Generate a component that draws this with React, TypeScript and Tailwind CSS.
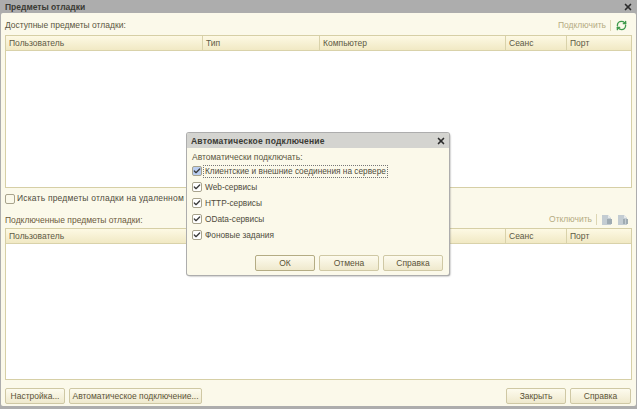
import React from 'react';
import { Check, RefreshCw, X } from 'lucide-react';

const font = { fontFamily: '"Liberation Sans", Arial, sans-serif' };

const columns = [
    { label: 'Пользователь', width: 'w-[197px]' },
    { label: 'Тип', width: 'w-[117px]' },
    { label: 'Компьютер', width: 'w-[186px]' },
    { label: 'Сеанс', width: 'w-[61px]' },
    { label: 'Порт', width: 'flex-1' },
];

function DebugTable({ height }: { height: string }) {
    return (
        <div className={`${height} mx-[4px] flex flex-col border border-[#d6cfa6] bg-white`}>
            <div className="flex h-[15px] shrink-0 border-b border-[#d9d2aa] bg-gradient-to-b from-[#fdf9e4] to-[#f1e9c4]">
                {columns.map((col) => (
                    <div
                        key={col.label}
                        className={`${col.width} border-r border-[#d9d2aa] pl-[3px] text-[8.5px] leading-[14px] text-[#5d5a45] last:border-r-0`}
                    >
                        {col.label}
                    </div>
                ))}
            </div>
        </div>
    );
}

function Button({ label, width, primary }: { label: string; width: string; primary?: boolean }) {
    return (
        <button
            className={`${width} h-[16px] whitespace-nowrap rounded-[2px] border ${primary ? 'border-[#b4ac84]' : 'border-[#cfc8a4]'} bg-gradient-to-b from-[#fdfbee] to-[#efe9cd] px-0 text-center text-[8.5px] leading-[14px] text-[#5b5337]`}
        >
            {label}
        </button>
    );
}

function CheckRow({ label, focused }: { label: string; focused?: boolean }) {
    return (
        <div className="flex h-[16px] items-center">
            <span
                className={`flex h-[10px] w-[10px] items-center justify-center rounded-[2px] border border-[#a8a38c] ${focused ? 'bg-[#b9cdf0]' : 'bg-white'}`}
            >
                <Check size={8} strokeWidth={4} className="text-[#3c3c3c]" />
            </span>
            <span
                className={`ml-[1px] pl-[1px] pr-[1px] text-[8.3px] leading-[11px] text-[#4f4c3c] ${focused ? 'border border-dotted border-[#777]' : 'border border-transparent'}`}
            >
                {label}
            </span>
        </div>
    );
}

export default function App() {
    return (
        <div className="relative h-[409px] w-[637px] overflow-hidden bg-[#adadad]" style={font}>
            {/* Title bar */}
            <div className="flex h-[13px] items-center justify-between pl-[5px] pr-[4px] pt-[1px]">
                <span className="text-[8.5px] font-bold leading-[12px] text-[#3a3a34]">Предметы отладки</span>
                <X size={10} strokeWidth={4} className="text-[#2c2c2c]" />
            </div>

            {/* Window body */}
            <div className="mx-[1px] flex h-[393px] flex-col rounded-[2px] bg-[#fbf9ea]">
                <div className="flex h-[22px] items-end justify-between pb-[4px] pl-[4px] pr-[9px]">
                    <span className="text-[8.5px] leading-[11px] text-[#5a5640]">Доступные предметы отладки:</span>
                    <div className="flex items-center">
                        <span className="text-[8.5px] leading-[11px] text-[#b5ab82]">Подключить</span>
                        <span className="ml-[4px] mr-[5px] h-[11px] w-px bg-[#ddd6b4]" />
                        <RefreshCw size={11} strokeWidth={3} className="text-[#3f9a4c]" />
                    </div>
                </div>

                <DebugTable height="h-[153px]" />

                <div className="mt-[4px] flex h-[13px] items-center pl-[4px]">
                    <span className="h-[10px] w-[10px] rounded-[2px] border border-[#a8a38c] bg-[#fbf9ea]" />
                    <span className="ml-[2px] whitespace-nowrap text-[8.5px] leading-[11px] tracking-[0.2px] text-[#4f4c3c]">
                        Искать предметы отладки на удаленном компьютере
                    </span>
                </div>

                <div className="mt-[3px] flex h-[20px] items-end justify-between pb-[2px] pl-[4px] pr-[7px]">
                    <span className="text-[8.5px] leading-[11px] text-[#6c5a3c]">Подключенные предметы отладки:</span>
                    <div className="mb-[1px] flex items-center">
                        <span className="text-[8.5px] leading-[11px] text-[#b5ab82]">Отключить</span>
                        <span className="ml-[4px] mr-[5px] h-[11px] w-px bg-[#ddd6b4]" />
                        <svg width="11" height="10" viewBox="0 0 11 10">
                            <path d="M0 0h6l3 3v7H0z" fill="#c3ccd2" />
                            <path d="M6 0l3 3H6z" fill="#e6e9ea" />
                            <path d="M5 4h5v5H5z" fill="#9fabb2" />
                        </svg>
                        <svg width="11" height="10" viewBox="0 0 11 10" className="ml-[5px]">
                            <path d="M0 0h6l3 3v7H0z" fill="#c3ccd2" />
                            <path d="M6 0l3 3H6z" fill="#e6e9ea" />
                            <path d="M5 4h2v5H5zM8 4h2v5H8z" fill="#9fabb2" />
                        </svg>
                    </div>
                </div>

                <DebugTable height="h-[152px]" />

                <div className="mt-[8px] flex items-center pl-[4px] pr-[5px]">
                    <Button label="Настройка..." width="w-[60px]" />
                    <Button label="Автоматическое подключение..." width="w-[133px] ml-[4px]" />
                    <div className="flex-1" />
                    <Button label="Закрыть" width="w-[60px]" />
                    <Button label="Справка" width="w-[61px] ml-[4px]" />
                </div>
            </div>

            {/* Modal dialog */}
            <div className="absolute left-[187px] top-[133px] h-[142px] w-[262px] rounded-[2px] bg-[#fbf9ea] shadow-[0_0_0_1px_#adadad,1px_1px_2px_#777]">
                <div className="flex h-[15px] items-center justify-between rounded-t-[2px] bg-[#d4d4d0] pl-[4px] pr-[3px] pt-[1px]">
                    <span className="text-[8.5px] font-bold leading-[13px] tracking-[0.2px] text-[#3a3a34]">Автоматическое подключение</span>
                    <X size={10} strokeWidth={4} className="text-[#2c2c2c]" />
                </div>
                <div className="pl-[5px] pr-[5px]">
                    <div className="mt-[3px] text-[8.5px] leading-[12px] text-[#5a5640]">Автоматически подключать:</div>
                    <CheckRow label="Клиентские и внешние соединения на сервере" focused />
                    <CheckRow label="Web-сервисы" />
                    <CheckRow label="HTTP-сервисы" />
                    <CheckRow label="OData-сервисы" />
                    <CheckRow label="Фоновые задания" />
                    <div className="mt-[12px] flex justify-end gap-[4px] pr-[1px]">
                        <Button label="ОК" width="w-[60px]" primary />
                        <Button label="Отмена" width="w-[60px]" />
                        <Button label="Справка" width="w-[60px]" />
                    </div>
                </div>
            </div>
        </div>
    );
}
